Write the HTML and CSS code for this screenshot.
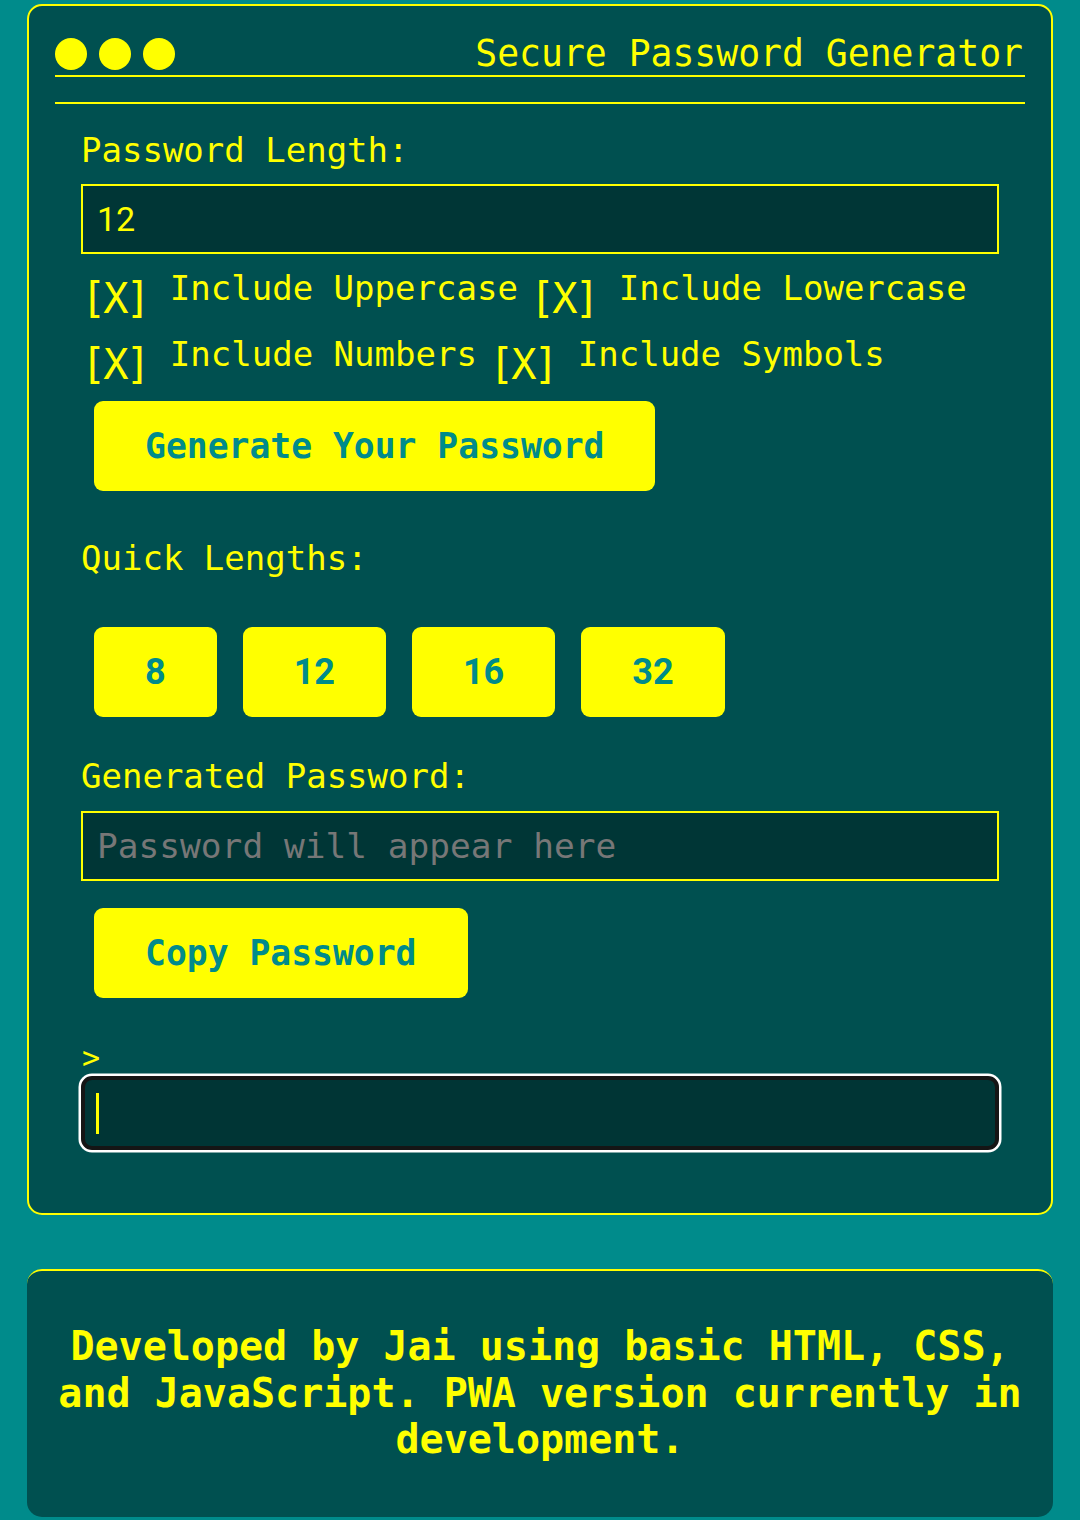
FILE: index.html
```html
<!DOCTYPE html>
<html lang="en">
<head>
<meta charset="utf-8">
<title>Secure Password Generator</title>
<link rel="stylesheet" href="styles.css">
</head>
<body>
<main class="card">
  <header class="titlebar">
    <div class="dots"><span class="dot"></span><span class="dot"></span><span class="dot"></span></div>
    <h1 class="title">Secure Password Generator</h1>
  </header>
  <div class="divider"></div>
  <section class="form">
    <label class="label label-length" for="len">Password Length:</label>
    <input class="field field-num" id="len" type="text" value="12">
    <div class="options">
      <label class="opt"><span class="box">[X]</span><span class="opt-text">Include Uppercase</span></label>
      <label class="opt"><span class="box">[X]</span><span class="opt-text">Include Lowercase</span></label>
      <label class="opt"><span class="box">[X]</span><span class="opt-text">Include Numbers</span></label>
      <label class="opt"><span class="box">[X]</span><span class="opt-text">Include Symbols</span></label>
    </div>
    <div class="actions"><button class="btn btn-wide" type="button">Generate Your Password</button></div>
    <p class="label label-quick">Quick Lengths:</p>
    <div class="quick">
      <button class="btn btn-q" type="button">8</button>
      <button class="btn btn-q" type="button">12</button>
      <button class="btn btn-q" type="button">16</button>
      <button class="btn btn-q" type="button">32</button>
    </div>
    <p class="label label-gen">Generated Password:</p>
    <input class="field field-out" type="text" placeholder="Password will appear here">
    <div class="actions actions-copy"><button class="btn btn-wide" type="button">Copy Password</button></div>
    <div class="prompt">&gt;</div>
    <div class="terminal"><span class="caret"></span></div>
  </section>
</main>
<footer class="footer">Developed by Jai using basic HTML, CSS, and JavaScript. PWA version currently in development.</footer>
</body>
</html>
```

FILE: styles.css
```css
* { box-sizing: border-box; }

html, body {
  margin: 0;
  background: #008b8b;
}

body {
  padding: 4px 27px 0;
  font-family: "DejaVu Sans Mono", "Liberation Mono", monospace;
  color: #ffff00;
}

.card {
  background: #005050;
  border: 2px solid #ffff00;
  border-radius: 15px;
  padding: 26px;
}

.titlebar {
  display: flex;
  align-items: center;
  justify-content: space-between;
  height: 45px;
  border-bottom: 2px solid #ffff00;
}

.dots {
  display: flex;
  gap: 12px;
}

.dot {
  width: 32px;
  height: 32px;
  border-radius: 50%;
  background: #ffff00;
}

.title {
  margin: 0;
  padding-right: 2px;
  font-weight: normal;
  font-size: 36.4px;
  line-height: 43px;
}

.divider {
  margin-top: 25px;
  height: 2px;
  background: #ffff00;
}

.form {
  padding: 0 26px;
}

.label {
  display: block;
  margin: 0;
  font-size: 34px;
  line-height: 40px;
}

.label-length { margin-top: 26px; }
.label-quick { margin-top: 34px; }
.label-gen { margin-top: 26px; }

.field {
  display: block;
  width: 100%;
  height: 70px;
  margin: 14px 0 0;
  padding: 0 14px;
  background: #003636;
  border: 2px solid #ffff00;
  border-radius: 0;
  color: #ffff00;
  outline: none;
}

.field-num {
  font-family: Roboto, "Noto Sans", sans-serif;
  font-size: 34px;
}

.field-out {
  margin-top: 15px;
  font-family: "DejaVu Sans Mono", "Liberation Mono", monospace;
  font-size: 34.5px;
}

.field-out::placeholder {
  color: #777777;
  opacity: 1;
}

.options {
  display: flex;
  flex-wrap: wrap;
  column-gap: 12px;
  row-gap: 12px;
  margin-top: 14px;
}

.opt {
  display: flex;
  align-items: flex-start;
  gap: 22px;
}

.box {
  margin-top: 7px;
  font-size: 42px;
  line-height: 47px;
  letter-spacing: -3px;
}

.opt-text {
  font-size: 34px;
  line-height: 40px;
}

.actions {
  display: flex;
}

.actions-copy {
  margin-top: 14px;
}

.btn {
  height: 90px;
  margin: 13px;
  padding: 0 51px;
  border: none;
  border-radius: 9px;
  background: #ffff00;
  color: #008b8b;
  font-weight: bold;
  cursor: pointer;
}

.btn-wide {
  font-family: "DejaVu Sans Mono", "Liberation Mono", monospace;
  font-size: 34.7px;
}

.quick {
  display: flex;
  margin-top: 36px;
}

.btn-q {
  font-family: Roboto, "Noto Sans", sans-serif;
  font-size: 36px;
}

.prompt {
  margin-top: 29px;
  font-size: 30px;
  line-height: 36px;
  padding-left: 1px;
}

.terminal {
  display: flex;
  align-items: center;
  height: 74px;
  margin-bottom: 37px;
  padding-left: 11px;
  background: #003535;
  border: 4px solid #151515;
  border-radius: 11px;
  box-shadow: 0 0 0 2.5px #ffffff;
}

.caret {
  width: 3px;
  height: 41px;
  background: #ffff00;
}

.footer {
  margin-top: 54px;
  padding: 52px 20px 54px;
  background: #005050;
  border-top: 2px solid #ffff00;
  border-radius: 15px;
  font-weight: bold;
  font-size: 40px;
  line-height: 46.5px;
  text-align: center;
}
```
